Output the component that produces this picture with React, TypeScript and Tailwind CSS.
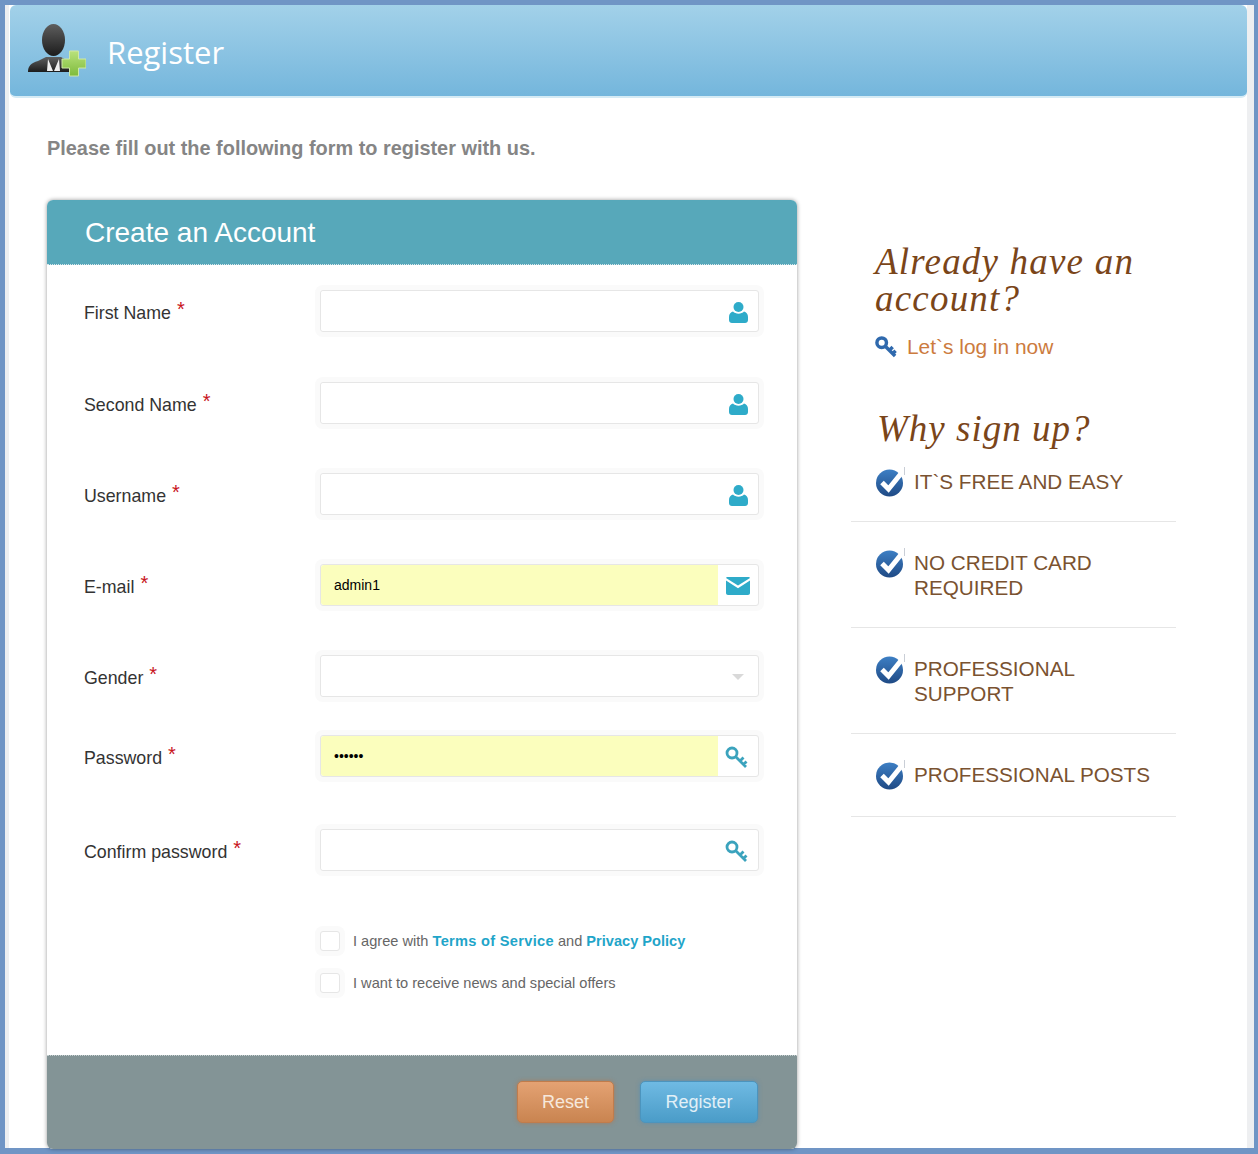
import React from "react";

const arial = "font-['Liberation_Sans',Arial,sans-serif]";
const serif = "font-['Liberation_Serif',Georgia,serif]";

const UserIcon = () => (
  <svg width="19" height="21" viewBox="0 0 19 21" className="text-[#2eabc9]">
    <circle cx="9.500" cy="5" r="5" fill="currentColor" />
    <path d="M4 9.500c1.200 1.400 3.300 2.200 5.500 2.200s4.300-.8 5.500-2.200c2.500.6 4 2.600 4 5.500v3c0 1.700-1.300 3-3 3H3c-1.700 0-3-1.300-3-3v-3c0-2.900 1.500-4.900 4-5.500z" fill="currentColor" />
  </svg>
);

const MailIcon = () => (
  <svg width="24" height="18" viewBox="0 0 24 18" className="text-[#2eabc9]">
    <path d="M1.500 0h21c.7 0 1.300.5 1.500 1.100L12 8.600 0 1.100C.2.500.8 0 1.500 0z" fill="currentColor" />
    <path d="M0 3.600l12 7.600 12-7.600V16c0 1.100-.9 2-2 2H2c-1.100 0-2-.9-2-2z" fill="currentColor" />
  </svg>
);

const KeyIcon = ({ color = "#3ba3bd", size = 23, weight = 2.800 }: { color?: string; size?: number; weight?: number }) => (
  <svg width={size} height={size} viewBox="0 0 23 23" fill="none">
    <ellipse cx="7" cy="7" rx="5" ry="5" stroke={color} strokeWidth={weight} />
    <path d="M10.500 10.500l10.500 10.500M15 15l3.500-3.500M18.500 18.500l3-3" stroke={color} strokeWidth={weight} />
  </svg>
);

const FieldKey = () => (
  <div className="-ml-[3px]">
    <KeyIcon />
  </div>
);

const CheckBadge = () => (
  <svg width="31" height="31" viewBox="0 0 31 31">
    <defs>
      <linearGradient id="badge" x1="0" y1="0" x2="0" y2="1">
        <stop offset="0" stopColor="#3d7fc4" />
        <stop offset="1" stopColor="#1f4a85" />
      </linearGradient>
    </defs>
    <circle cx="14.500" cy="17" r="13.500" fill="url(#badge)" />
    <path d="M7 16.500l6.500 6.500L26.500 7" fill="none" stroke="#ffffff" strokeWidth="5" />
    <path d="M29.500 1v8" stroke="#c9ced6" strokeWidth="1" />
  </svg>
);

const Avatar = () => (
  <svg width="58" height="53" viewBox="0 0 58 53">
    <defs>
      <linearGradient id="suit" x1="0" y1="0" x2="0" y2="1">
        <stop offset="0" stopColor="#5e5e5e" />
        <stop offset="1" stopColor="#1c1c1c" />
      </linearGradient>
      <linearGradient id="plus" x1="0" y1="0" x2="0" y2="1">
        <stop offset="0" stopColor="#b9e27c" />
        <stop offset="1" stopColor="#7ebb3c" />
      </linearGradient>
    </defs>
    <ellipse cx="25.500" cy="16" rx="11.500" ry="16" fill="url(#suit)" />
    <path d="M0 48c0-6 3-9 10-11l8-4h15l7 4c6 2 10 5 10 11z" fill="url(#suit)" />
    <path d="M20 35l5 12h-6zM31 35l-5 12h6z" fill="#eeeeee" />
    <path d="M41.500 27h9v8h7.500v9h-7.500v8h-9v-8H34v-9h7.500z" fill="url(#plus)" stroke="#cfe8a6" strokeWidth="1" />
  </svg>
);

const Caret = () => (
  <svg width="12" height="6" viewBox="0 0 12 6">
    <path d="M0 0h12L6 6z" fill="#d9d9d9" />
  </svg>
);

type Field = {
  label: string;
  icon: React.ReactNode;
  value?: string;
  filled?: boolean;
  gap: string;
};

const fields: Field[] = [
  { label: "First Name", icon: <UserIcon />, gap: "mb-[50px]" },
  { label: "Second Name", icon: <UserIcon />, gap: "mb-[49px]" },
  { label: "Username", icon: <UserIcon />, gap: "mb-[49px]" },
  { label: "E-mail", icon: <MailIcon />, value: "admin1", filled: true, gap: "mb-[49px]" },
  { label: "Gender", icon: <Caret />, gap: "mb-[38px]" },
  { label: "Password", icon: <FieldKey />, value: "••••••", filled: true, gap: "mb-[52px]" },
  { label: "Confirm password", icon: <FieldKey />, gap: "mb-[60px]" },
];

const reasons = [
  { lines: ["IT`S FREE AND EASY"], cls: "h-[66px] pt-[13px]" },
  { lines: ["NO CREDIT CARD", "REQUIRED"], cls: "h-[106px] pt-[28px]" },
  { lines: ["PROFESSIONAL", "SUPPORT"], cls: "h-[106px] pt-[28px]" },
  { lines: ["PROFESSIONAL POSTS"], cls: "h-[83px] pt-[28px]" },
];

const Row = ({ field }: { field: Field }) => (
  <div className={`flex items-center ${field.gap}`}>
    <div className="w-[236px] flex items-start text-[#333] text-[17.800px] leading-none pt-[6px]">
      <span>{field.label}</span>
      <span className="ml-[6px] -mt-[6px] text-[#c8141c] text-[20px]">*</span>
    </div>
    <div className="w-[439px] h-[42px] flex rounded-[3px] border border-[#e6e6e6] bg-white shadow-[0_0_0_5px_#fafafa]">
      <div className={`flex-1 flex items-center pl-[13px] text-[14px] text-black rounded-l-[3px] ${field.filled ? "bg-[#fbfebd]" : "bg-white"}`}>
        {field.value}
      </div>
      <div className="w-[40px] flex items-center justify-center pt-[2px]">{field.icon}</div>
    </div>
  </div>
);

const Check = ({ children }: { children: React.ReactNode }) => (
  <div className="flex items-center h-[20px] text-[14.600px] text-[#666]">
    <div className="w-[20px] h-[20px] mr-[13px] rounded-[3px] border border-[#e6e6e6] bg-white shadow-[0_0_0_5px_#fafafa]" />
    <div className="pt-[2px]">{children}</div>
  </div>
);

export default function App() {
  return (
    <div className={`w-[1258px] h-[1154px] overflow-hidden bg-[#7095c5] pt-[5px] pl-[5px] pr-[4px] pb-[6px] ${arial}`}>
      <div className="h-[1143px] bg-white border-l-[4px] border-r-[7px] border-[#eeeff1]">
        <div className="ml-px h-[93px] flex items-center rounded-[6px] border-b-2 border-[#d5ebf5] bg-linear-to-b from-[#a2d1e9] to-[#74b6dc] pl-[18px]">
          <Avatar />
          <h1 className="ml-[21px] pt-[3px] font-['Open_Sans',sans-serif] text-[31px] text-white">Register</h1>
        </div>

        <p className="mt-[38px] ml-[38px] text-[19.900px] leading-[24px] font-bold text-[#858585]">
          Please fill out the following form to register with us.
        </p>

        <div className="mt-[40px] flex items-start">
          <div className="ml-[38px] w-[750px] h-[949px] rounded-[6px] bg-white shadow-[0_0_4px_rgba(0,0,0,0.4)] overflow-hidden">
            <div className="h-[65px] flex items-center pl-[38px] pt-[2px] bg-[#57a8ba] border-b border-dotted border-[#d8e8ec] text-[28px] text-white">
              Create an Account
            </div>
            <div className="h-[790px] pt-[25px] pl-[37px]">
              {fields.map((f) => (
                <Row key={f.label} field={f} />
              ))}
              <div className="ml-[236px] flex flex-col gap-[22px]">
                <Check>
                  I agree with <a className="font-bold tracking-[0.3px] text-[#1fa5c9]">Terms of Service</a> and{" "}
                  <a className="font-bold text-[#1fa5c9]">Privacy Policy</a>
                </Check>
                <Check>I want to receive news and special offers</Check>
              </div>
            </div>
            <div className="h-[94px] flex items-start justify-end pt-[25px] pr-[39px] gap-[26px] bg-[#839496] border-t border-dotted border-[#c5cfd0]">
              <button className="w-[97px] h-[42px] rounded-[5px] border border-[#c07c4c] bg-linear-to-b from-[#e4a273] to-[#c98450] text-[18px] text-[#f6e8dc] shadow-[0_0_4px_rgba(190,110,60,0.6)]">
                Reset
              </button>
              <button className="w-[118px] h-[42px] rounded-[5px] border border-[#4c94bd] bg-linear-to-b from-[#6fbae3] to-[#4a9cc8] text-[18px] text-[#e2f0f7] shadow-[0_0_4px_rgba(70,140,190,0.6)]">
                Register
              </button>
            </div>
          </div>

          <aside className="ml-[54px] w-[325px] pt-[43px]">
            <h2 className={`ml-[24px] ${serif} italic text-[37px] leading-[37px] tracking-[1.2px] text-[#7a4519]`}>
              Already have an
              <br />
              account?
            </h2>
            <div className="ml-[24px] mt-[18px] flex items-center h-[24px]">
              <KeyIcon color="#2f69ad" size={22} weight={3.600} />
              <span className="ml-[10px] text-[20.900px] text-[#cc7b3e]">Let`s log in now</span>
            </div>
            <h2 className={`ml-[26px] mt-[51px] ${serif} italic text-[37px] leading-[37px] tracking-[1px] text-[#7a4519]`}>
              Why sign up?
            </h2>
            <ul className="mt-[9px]">
              {reasons.map((r) => (
                <li key={r.lines[0]} className={`${r.cls} pl-[24px] flex items-start border-b border-[#e6e6e6]`}>
                  <div className="-mt-[3px]">
                    <CheckBadge />
                  </div>
                  <div className="ml-[8px] text-[20.700px] leading-[25px] text-[#7a5230]">
                    {r.lines.map((l) => (
                      <div key={l}>{l}</div>
                    ))}
                  </div>
                </li>
              ))}
            </ul>
          </aside>
        </div>
      </div>
    </div>
  );
}
